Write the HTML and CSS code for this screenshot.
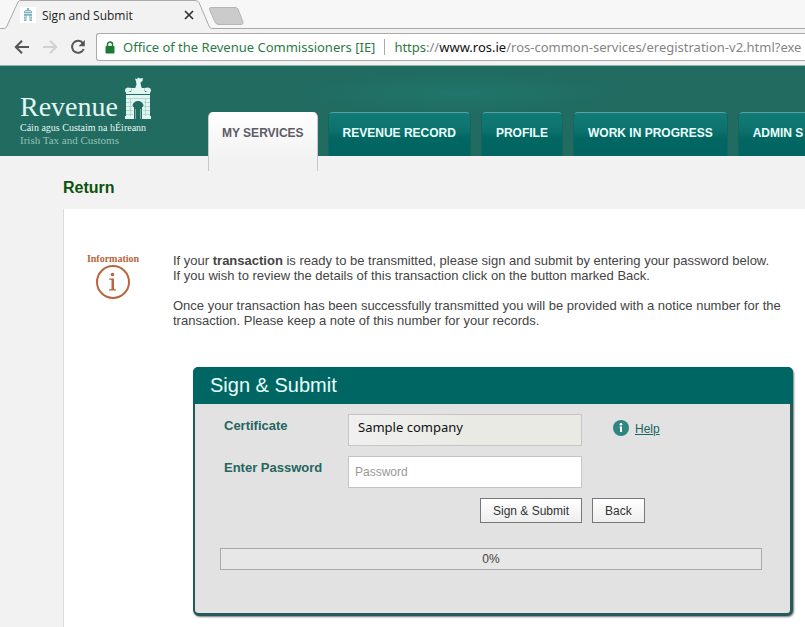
FILE: index.html
```html
<!DOCTYPE html>
<html lang="en">
<head>
<meta charset="utf-8">
<title>Sign and Submit</title>
<link rel="stylesheet" href="styles.css">
</head>
<body>
<div class="browser">
  <div class="tabstrip">
    <svg class="tab-shape" width="250" height="29" viewBox="0 0 250 29" aria-hidden="true">
      <path d="M0 28.500H4Q6 28.500 7 26L18 2Q19 .5 21 .5H195Q198 .5 199 2.500L209 26Q210 28.500 212 28.500H250V29H0Z" fill="#f2f2f2"/>
      <path d="M0 28.500H4Q6 28.500 7 26L18 2Q19 .5 21 .5H195Q198 .5 199 2.500L209 26Q210 28.500 212 28.500H250" fill="none" stroke="#a9a9a9"/>
      <path d="M211 7.500H235Q237 7.500 238 9L243 22Q243.500 24.500 241 24.500H219Q216 24.500 215 22L209.500 9.500Q209 7.500 211 7.500Z" fill="#cbcbcb" stroke="#b5b5b5"/>
    </svg>
    <div class="tab">
      <svg class="favicon" width="16" height="16" viewBox="0 0 16 16" aria-hidden="true">
        <path fill="#fff" d="M0 0h16v16H0z"/>
        <path fill="#84b7be" d="M7 1h2v2h2v1h1v10H9.500v-4a1.500 1.500 0 0 0-3 0v4H4V4h1V3h2z"/>
        <path stroke="#fff" stroke-width=".6" d="M4 6.500h8M4 9.500h2M10 9.500h2M4 12h2M10 12h2M5 4.500h6"/>
      </svg>
      <span class="tab-title">Sign and Submit</span>
      <button class="tab-close" type="button" aria-label="Close tab">
        <svg width="10" height="10" viewBox="0 0 10 10"><path d="M1 1l8 8M9 1L1 9" stroke="#333" stroke-width="1.700"/></svg>
      </button>
    </div>
  </div>
  <div class="toolbar">
    <button class="tool" type="button" aria-label="Back one page">
      <svg width="16" height="16" viewBox="0 0 16 16"><path d="M15 8H2.500M8 1.800L1.800 8L8 14.200" fill="none" stroke="#55565a" stroke-width="2"/></svg>
    </button>
    <button class="tool" type="button" aria-label="Forward one page">
      <svg width="16" height="16" viewBox="0 0 16 16"><path d="M1 8h12.500M8 1.800L14.200 8L8 14.200" fill="none" stroke="#d2d2d2" stroke-width="2"/></svg>
    </button>
    <button class="tool" type="button" aria-label="Reload">
      <svg width="16" height="16" viewBox="0 0 16 16"><path d="M13 4.300A6 6 0 1 0 13.700 10" fill="none" stroke="#55565a" stroke-width="2"/><path d="M14.800 1v6.200H8.600z" fill="#55565a"/></svg>
    </button>
    <div class="address">
      <svg class="lock" width="10" height="13" viewBox="0 0 10 13" aria-hidden="true"><path d="M2.500 6V3.500a2.500 2.500 0 0 1 5 0V6" fill="none" stroke="#1d7a36" stroke-width="1.500"/><rect x=".5" y="5" width="9" height="7.500" rx="1" fill="#1d7a36"/></svg>
      <span class="owner">Office of the Revenue Commissioners [IE]</span>
      <span class="url"><span class="scheme">https</span>://<span class="host">www.ros.ie</span>/ros-common-services/eregistration-v2.html?exe</span>
    </div>
  </div>
</div>

<header class="site-header">
  <a class="brand" href="#" aria-label="Revenue">
    <span class="brand-top">
      <span class="brand-name">Revenue</span>
      <svg width="28" height="43" viewBox="0 0 28 43" aria-hidden="true">
        <g fill="#e2f6f1">
          <path d="M11 1.500l2 .5 1-1.500 2 1 3-.5-.5 3-2 1.500.5 3 1 3h-7l1.500-4-.5-3z"/>
          <path d="M8 11h12l1 4h5v2H2v-2h5z"/>
          <path d="M8 11L3.500 10.500Q1 11 1 13.500T3 15.500L7 14zM20 11L24.500 10.500Q27 11 27 13.500T25 15.500L21 14z"/>
          <path fill-rule="evenodd" d="M2 18h24v24H18V30.500l1.500-1.500a5.500 5 0 1 0-11 0l1.500 1.500V42H2z"/>
          <path d="M1 39h9v3H1zM18 39h9v3H18z"/>
        </g>
        <path d="M2 21.500h24M2 25.500h6M20 25.500h6M2 29.500h6M20 29.500h6M2 33.500h7M19 33.500h7M2 37.500h7M19 37.500h7M6.500 22v17M21.500 22v17" stroke="#9fcbc1" stroke-width=".7"/>
        <path d="M11.500 32v10M16.500 32v10" stroke="#75ada2"/>
      </svg>
    </span>
    <span class="brand-irish">Cáin agus Custaim na hÉireann</span>
    <span class="brand-english">Irish Tax and Customs</span>
  </a>
  <nav class="nav" aria-label="Main">
    <a class="nav-item active" href="#" aria-current="page">MY SERVICES</a>
    <a class="nav-item" href="#">REVENUE RECORD</a>
    <a class="nav-item" href="#">PROFILE</a>
    <a class="nav-item" href="#">WORK IN PROGRESS</a>
    <a class="nav-item" href="#">ADMIN S</a>
  </nav>
</header>

<main class="page">
  <h1>Return</h1>
  <div class="panel">
    <section class="notice">
      <div class="info">
        <span>Information</span>
        <svg width="36" height="36" viewBox="0 0 36 36" aria-hidden="true"><circle cx="18" cy="18" r="16" fill="none" stroke="#b9663d" stroke-width="2"/><circle cx="17.500" cy="10.500" r="1.800" fill="#b9663d"/><path d="M14 14.500h5V25l2 .5V26.500h-7V25.500l2.500-.5V16L14 15.500z" fill="#b9663d"/></svg>
      </div>
      <div class="message">
        <p>If your <strong>transaction</strong> is ready to be transmitted, please sign and submit by entering your password below.<br>If you wish to review the details of this transaction click on the button marked Back.</p>
        <p>Once your transaction has been successfully transmitted you will be provided with a notice number for the<br>transaction. Please keep a note of this number for your records.</p>
      </div>
    </section>

    <form class="card">
      <h2>Sign &amp; Submit</h2>
      <div class="card-body">
        <div class="row">
          <label for="certificate">Certificate</label>
          <input class="certificate" id="certificate" type="text" value="Sample company" readonly>
          <div class="help">
            <svg width="16" height="16" viewBox="0 0 16 16" aria-hidden="true"><circle cx="8" cy="8" r="8" fill="#2e8581"/><circle cx="8" cy="4.200" r="1.300" fill="#fff"/><path d="M6.500 6.500H9V12H7V7.500h-.5z" fill="#fff"/></svg>
            <a href="#">Help</a>
          </div>
        </div>
        <div class="row">
          <label for="password">Enter Password</label>
          <input id="password" type="password" placeholder="Password">
        </div>
        <div class="actions">
          <button type="button">Sign &amp; Submit</button>
          <button type="button">Back</button>
        </div>
        <div class="progress" role="progressbar" aria-label="Signing progress" aria-valuemin="0" aria-valuemax="100" aria-valuenow="0">0%</div>
      </div>
    </form>
  </div>
</main>
</body>
</html>
```
FILE: styles.css
```css
* {
  box-sizing: border-box;
}

body {
  margin: 0;
  min-height: 100vh;
  display: flex;
  flex-direction: column;
  overflow: hidden;
  background: #f2f2f2;
  color: #444;
  font-family: "Liberation Sans", Arial, sans-serif;
  font-size: 12px;
}

button {
  padding: 0;
  border: 0;
  background: none;
  font: inherit;
}

/* Browser frame */
.browser {
  font-family: "Open Sans", "Noto Sans", sans-serif;
  background: #f2f2f2;
  border-bottom: 1px solid #8fb5b0;
}

.tabstrip {
  position: relative;
  height: 29px;
  background: linear-gradient(#a9a9a9, #a9a9a9) bottom right / calc(100% - 250px) 1px no-repeat #f7f7f7;
}

.tab-shape {
  position: absolute;
  inset: 0 auto auto 0;
}

.tab {
  position: relative;
  display: flex;
  align-items: center;
  width: 194px;
  height: 30px;
  padding-left: 20px;
  color: #222;
}

.tab-title {
  flex: 1;
  margin-left: 6px;
}

.tab-close,
.tool {
  display: flex;
}

.toolbar {
  display: flex;
  align-items: center;
  gap: 12px;
  height: 36px;
  padding-left: 14px;
}

.address {
  flex: 1;
  display: flex;
  align-items: center;
  min-width: 0;
  height: 28px;
  margin-left: -2px;
  padding-left: 8px;
  overflow: hidden;
  border: 1px solid #aaa;
  border-right: 0;
  border-radius: 3px 0 0 3px;
  background: #fff;
  white-space: nowrap;
  font-family: "Noto Sans", "Open Sans", sans-serif;
  font-size: 13px;
}

.lock {
  flex: none;
}

.owner {
  margin-left: 8px;
  padding-right: 9px;
  border-right: 1px solid #aaa;
  color: #2c7a45;
  line-height: 16px;
}

.url {
  padding-left: 9px;
  color: #858585;
}

.scheme {
  color: #2c7a45;
}

.host {
  color: #111;
}

/* Site header */
.site-header {
  display: flex;
  height: 90px;
  background: radial-gradient(ellipse at 57% 30%, #20756a, #216b61 25%);
}

.brand {
  flex: none;
  display: flex;
  flex-direction: column;
  width: 208px;
  padding: 10px 0 0 20px;
  color: #e2f6f1;
  font-family: "Liberation Serif", serif;
  font-size: 11px;
  line-height: 12px;
  text-decoration: none;
}

.brand-top {
  display: flex;
  align-items: flex-end;
  gap: 6px;
  height: 44px;
}

.brand-name {
  font-size: 28px;
  line-height: 26px;
}

.brand-irish {
  margin-top: 2px;
  font-size: 10px;
}

.brand-english {
  color: #92c0b6;
}

.nav {
  display: flex;
  flex: 1;
  gap: 10px;
  min-width: 0;
  height: 106px;
  padding-top: 46px;
  overflow: hidden;
  align-items: flex-start;
}

.nav-item {
  flex: none;
  height: 44px;
  padding: 0 14px;
  border: 1px solid #17645f;
  border-top-color: #54a49c;
  border-bottom: 0;
  border-radius: 5px 5px 0 0;
  background: linear-gradient(#127b77, #0c716c 42%, #026762 58%, #006560);
  color: #e9fffb;
  font-size: 12px;
  font-weight: bold;
  line-height: 40px;
  text-decoration: none;
  white-space: nowrap;
}

.nav-item:last-child {
  flex: 1;
  padding-right: 0;
  border-right: 0;
  border-top-right-radius: 0;
}

.nav-item.active {
  height: 59px;
  padding: 0 13px;
  border-color: #fff #c8c8c8 #f2f2f2;
  background: linear-gradient(#fff, #f2f2f2 80%);
  color: #5c5c66;
}

/* Page */
.page {
  flex: 1;
  display: flex;
  flex-direction: column;
  padding-left: 63px;
}

h1 {
  margin: 0;
  padding: 22px 0 12px;
  color: #0b520b;
  font-size: 16px;
  line-height: 19px;
}

.panel {
  flex: 1;
  padding: 44px 12px 10px 23px;
  border-left: 1px solid #dcdcdc;
  background: #fff;
}

.notice {
  display: flex;
  gap: 34px;
}

.info {
  flex: none;
  display: flex;
  flex-direction: column;
  align-items: center;
  width: 52px;
  color: #b9663d;
  font-family: "Liberation Serif", serif;
  font-size: 10px;
  font-weight: bold;
  line-height: 11px;
}

.message {
  flex: 1;
  min-width: 0;
  white-space: nowrap;
  font-size: 13px;
  line-height: 15px;
}

.message p {
  margin: 0 0 15px;
}

.card {
  margin: 24px 0 0 106px;
  border: 2px solid #25595a;
  border-right-width: 3px;
  border-bottom-width: 3px;
  border-radius: 6px;
  background: #e2e2e2;
  box-shadow: 1px 1px 2px #777;
}

h2 {
  margin: -2px -3px 0 -2px;
  padding: 0 17px 1px;
  border-radius: 5px 5px 0 0;
  background: #006663;
  color: #e9fffb;
  font-size: 20px;
  font-weight: normal;
  line-height: 36px;
}

.card-body {
  padding: 10px 28px 43px 25px;
}

.row {
  display: flex;
  margin: 0 0 10px 4px;
}

label {
  width: 124px;
  color: #25655f;
  font-size: 13px;
  font-weight: bold;
  line-height: 23px;
}

input {
  width: 234px;
  height: 32px;
  padding: 0 6px;
  border: 1px solid #c5c5c5;
  background: #fff;
  color: #111;
  font: 12px "Liberation Sans", Arial, sans-serif;
}

input::placeholder {
  color: #999;
}

.certificate {
  padding: 0 9px 7px;
  background: linear-gradient(90deg, #f0f0f0, #eaeae5 50%);
  font-family: "Noto Sans", "Open Sans", sans-serif;
  font-size: 13px;
}

.help {
  display: flex;
  gap: 6px;
  margin-left: 31px;
  padding-top: 6px;
}

.help a {
  padding-top: 2px;
  color: #17655f;
}

.actions {
  display: flex;
  gap: 10px;
  margin-left: 260px;
}

.actions button {
  height: 25px;
  padding: 0 12px;
  border: 1px solid #777;
  background: linear-gradient(#fff, #eee);
  color: #333;
}

.progress {
  height: 22px;
  margin-top: 25px;
  border: 1px solid #aaa;
  background: #e7e7e7;
  line-height: 20px;
  text-align: center;
}
```
